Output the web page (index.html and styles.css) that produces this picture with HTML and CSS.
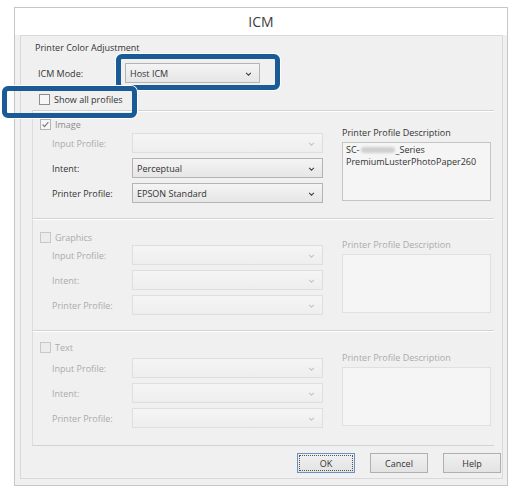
FILE: index.html
```html
<!DOCTYPE html>
<html lang="en">
  <head>
    <meta charset="UTF-8" />
    <meta name="viewport" content="width=device-width, initial-scale=1.0" />
    <title>ICM</title>
    <link rel="stylesheet" href="styles.css">
  </head>
  <body>
    <div class="window">
      <div class="titlebar">ICM</div>
      <div class="client">
        <div class="group">
          <div class="group-title">Printer Color Adjustment</div>

          <!-- ICM mode -->
          <div class="mode-row">
            <span class="mode-label">ICM Mode:</span>
            <div class="combo combo-mode">
              <span>Host ICM</span>
              <svg class="chev" viewBox="0 0 8 5"><path d="M1 1L4 4L7 1" /></svg>
            </div>
            <span class="callout callout-mode"></span>
          </div>

          <div class="check-row show-all">
            <span class="check"></span>
            <span>Show all profiles</span>
            <span class="callout callout-check"></span>
          </div>

          <!-- Image -->
          <section class="profile profile-image">
            <div class="fields">
              <div class="check-row">
                <span class="check check-dim">
                  <svg viewBox="0 0 11 11"><path d="M2 5.5L4.3 8L9 2.5" /></svg>
                </span>
                <span class="dim">Image</span>
              </div>
              <div class="field-grid">
                <span class="off">Input Profile:</span>
                <div class="combo combo-off"><svg class="chev" viewBox="0 0 8 5"><path d="M1 1L4 4L7 1" /></svg></div>
                <span>Intent:</span>
                <div class="combo"><span>Perceptual</span><svg class="chev" viewBox="0 0 8 5"><path d="M1 1L4 4L7 1" /></svg></div>
                <span>Printer Profile:</span>
                <div class="combo"><span>EPSON Standard</span><svg class="chev" viewBox="0 0 8 5"><path d="M1 1L4 4L7 1" /></svg></div>
              </div>
            </div>
            <div class="desc">
              <div class="desc-label">Printer Profile Description</div>
              <div class="desc-box">
                <div>SC-<span class="blur"></span>_Series</div>
                <div>PremiumLusterPhotoPaper260</div>
              </div>
            </div>
          </section>

          <!-- Graphics -->
          <section class="profile profile-graphics">
            <div class="fields">
              <div class="check-row">
                <span class="check check-off"></span>
                <span class="off">Graphics</span>
              </div>
              <div class="field-grid">
                <span class="off">Input Profile:</span>
                <div class="combo combo-off"><svg class="chev" viewBox="0 0 8 5"><path d="M1 1L4 4L7 1" /></svg></div>
                <span class="off">Intent:</span>
                <div class="combo combo-off"><svg class="chev" viewBox="0 0 8 5"><path d="M1 1L4 4L7 1" /></svg></div>
                <span class="off">Printer Profile:</span>
                <div class="combo combo-off"><svg class="chev" viewBox="0 0 8 5"><path d="M1 1L4 4L7 1" /></svg></div>
              </div>
            </div>
            <div class="desc">
              <div class="desc-label off">Printer Profile Description</div>
              <div class="desc-box desc-off"></div>
            </div>
          </section>

          <!-- Text -->
          <section class="profile profile-text">
            <div class="fields">
              <div class="check-row">
                <span class="check check-off"></span>
                <span class="off">Text</span>
              </div>
              <div class="field-grid">
                <span class="off">Input Profile:</span>
                <div class="combo combo-off"><svg class="chev" viewBox="0 0 8 5"><path d="M1 1L4 4L7 1" /></svg></div>
                <span class="off">Intent:</span>
                <div class="combo combo-off"><svg class="chev" viewBox="0 0 8 5"><path d="M1 1L4 4L7 1" /></svg></div>
                <span class="off">Printer Profile:</span>
                <div class="combo combo-off"><svg class="chev" viewBox="0 0 8 5"><path d="M1 1L4 4L7 1" /></svg></div>
              </div>
            </div>
            <div class="desc">
              <div class="desc-label off">Printer Profile Description</div>
              <div class="desc-box desc-off"></div>
            </div>
          </section>

          <div class="buttons">
            <button class="btn btn-default">OK</button>
            <button class="btn">Cancel</button>
            <button class="btn">Help</button>
          </div>
        </div>
      </div>
    </div>
  </body>
</html>
```

FILE: styles.css
```css
body {
  margin: 0;
  padding: 7px 0 0 14px;
  background: #fff;
  font-family: "Open Sans", "Liberation Sans", sans-serif;
  font-size: 9px;
  color: #333;
}

.window {
  width: 494px;
  box-sizing: border-box;
  border: 1px solid #c6c6c6;
  background: #f0f0f0;
}

.titlebar {
  height: 27px;
  line-height: 27px;
  background: #fff;
  text-align: center;
  font-size: 14px;
  color: #3c3c3c;
}

.client {
  padding: 0 4px 6px 5px;
}

.group {
  border: 1px solid #d9d9d9;
  padding: 0 1px 5px 11px;
}

.group-title {
  padding-top: 5px;
  line-height: 14px;
  margin-left: 3px;
}

.mode-row {
  position: relative;
  display: flex;
  align-items: center;
  margin: 8px 0 0 6px;
}

.mode-label {
  width: 87px;
}

.combo {
  position: relative;
  display: flex;
  align-items: center;
  box-sizing: border-box;
  height: 20px;
  padding-left: 4px;
  border: 1px solid #b4b4b4;
  background: linear-gradient(#f4f4f4, #e6e6e6);
}

.combo-mode {
  width: 135px;
}

.combo-off {
  border-color: #dedede;
  background: linear-gradient(#f5f5f5, #eeeeee);
}

.chev {
  position: absolute;
  right: 7px;
  top: 8px;
  width: 7px;
  height: 4px;
  fill: none;
  stroke: #444;
  stroke-width: 1.3;
}

.combo-off .chev {
  stroke: #c4c4c4;
}

.callout {
  position: absolute;
  box-sizing: border-box;
  border: 5px solid #1a5b96;
  border-radius: 6px;
  box-shadow: 0 0 0 1px #fff;
}

.callout-mode {
  left: 78px;
  top: -9px;
  width: 164px;
  height: 36px;
}

.callout-check {
  left: -37px;
  top: -6px;
  width: 135px;
  height: 32px;
}

.check-row {
  position: relative;
  display: flex;
  align-items: center;
  gap: 4px;
  height: 14px;
}

.show-all {
  margin: 9px 0 0 7px;
}

.check {
  box-sizing: border-box;
  width: 11px;
  height: 11px;
  border: 1px solid #8e8e8e;
  background: #f7f7f7;
}

.check svg {
  display: block;
  width: 9px;
  height: 9px;
  fill: none;
  stroke: #7a7a7a;
  stroke-width: 1.4;
}

.check-dim {
  border-color: #b4b4b4;
}

.check-off {
  border-color: #c8c8c8;
  background: #ececec;
}

.dim {
  color: #8c8c8c;
}

.off {
  color: #ababab;
}

/* profile sections */
.profile {
  display: flex;
  margin-right: 7px;
  padding-left: 7px;
  border-top: 1px solid #d2d2d2;
  border-left: 1px solid #dddddd;
  box-shadow: inset 0 1px 0 #fff;
}

.profile-image {
  margin-top: 4px;
  padding-top: 6px;
  padding-bottom: 15px;
}

.profile-graphics {
  padding-top: 11px;
  padding-bottom: 15px;
}

.profile-text {
  padding-top: 9px;
  padding-bottom: 17px;
  border-bottom: 1px solid #d2d2d2;
}

.field-grid {
  display: grid;
  grid-template-columns: 80px 191px;
  grid-auto-rows: 20px;
  row-gap: 5px;
  align-items: center;
  margin-left: 12px;
}

.profile-image .field-grid { margin-top: 2px; }
.profile-graphics .field-grid { margin-top: 1px; }
.profile-text .field-grid { margin-top: 4px; }

.desc {
  width: 149px;
  margin-left: 19px;
}

.profile-image .desc { padding-top: 10px; }
.profile-graphics .desc { padding-top: 9px; }
.profile-text .desc { padding-top: 12px; }

.desc-label {
  line-height: 12px;
}

.desc-box {
  box-sizing: border-box;
  height: 59px;
  margin-top: 3px;
  padding: 1px 3px;
  line-height: 12px;
  border: 1px solid #c4c4c4;
  background: #f5f5f5;
}

.desc-off {
  border-color: #e0e0e0;
}

.blur {
  display: inline-block;
  width: 34px;
  height: 6px;
  margin: 0 1px;
  background: #cfcfcf;
  border-radius: 3px;
  filter: blur(1px);
}

.buttons {
  display: flex;
  justify-content: flex-end;
  gap: 15px;
  margin-top: 7px;
}

.btn {
  width: 58px;
  height: 20px;
  padding: 0;
  font-family: inherit;
  font-size: 9px;
  color: #333;
  border: 1px solid #b0b0b0;
  background: linear-gradient(#f0f0f0, #e3e3e3);
}

.btn-default {
  border-color: #6a92c4;
  outline: 1px dotted #555;
  outline-offset: -3px;
}
```
